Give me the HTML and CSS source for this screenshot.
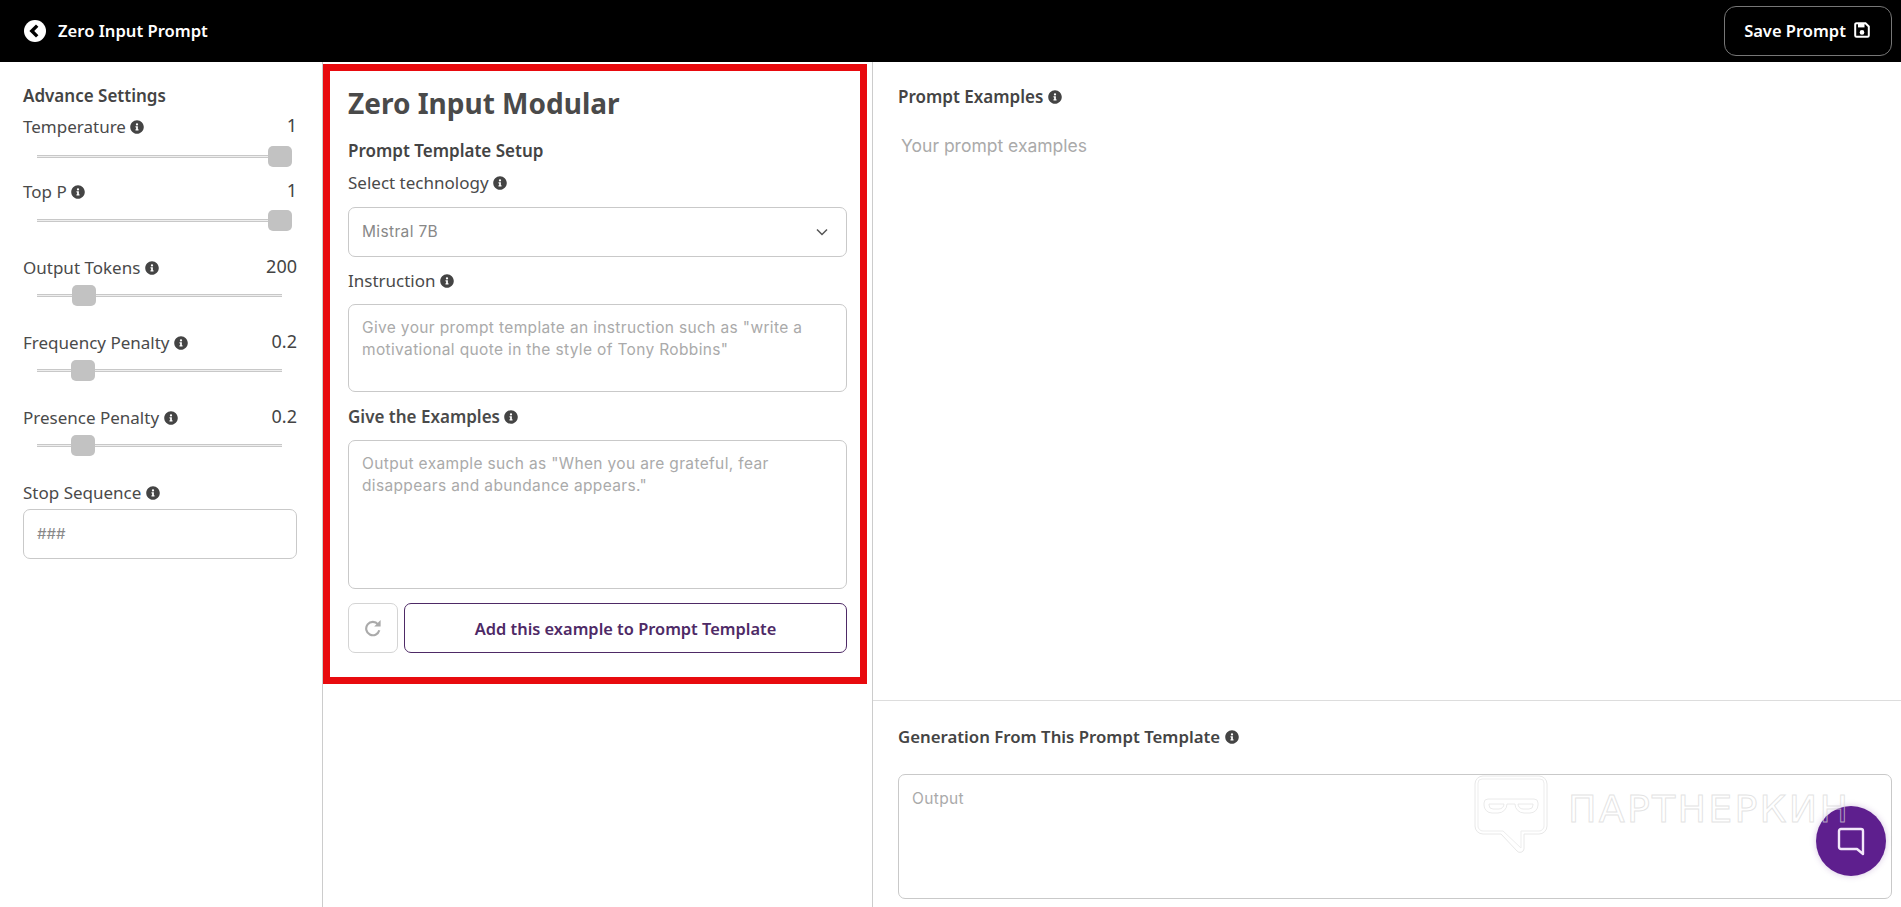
FILE: index.html
```html
<!DOCTYPE html>
<html lang="en">
<head>
<meta charset="utf-8">
<title>Zero Input Prompt</title>
<link rel="stylesheet" href="styles.css">
</head>
<body>
<svg class="defs" width="0" height="0" aria-hidden="true">
  <symbol id="info" viewBox="0 0 512 512"><path d="M256 8C119 8 8 119 8 256s111 248 248 248 248-111 248-248S393 8 256 8zm0 110a42 42 0 1 1 0 84 42 42 0 0 1 0-84zm56 254c0 7-5 12-12 12h-88c-7 0-12-5-12-12v-24c0-7 5-12 12-12h12v-64h-12c-7 0-12-5-12-12v-24c0-7 5-12 12-12h64c7 0 12 5 12 12v100h12c7 0 12 5 12 12z"/></symbol>
</svg>
<header class="topbar">
  <div class="crumb">
    <svg class="back" viewBox="0 0 22 22"><circle cx="11" cy="11" r="11" fill="#fff"/><path d="M13.2 5.6L7.8 11l5.4 5.4" fill="none" stroke="#000" stroke-width="3.4"/></svg>
    <span>Zero Input Prompt</span>
  </div>
  <button class="save">Save Prompt
    <svg class="save-ico" viewBox="0 0 16 16"><path d="M2.5 1.2h9l3.3 3.3v9a1.3 1.3 0 0 1-1.3 1.3h-11a1.3 1.3 0 0 1-1.3-1.3v-11a1.3 1.3 0 0 1 1.3-1.3z" fill="none" stroke="#fff" stroke-width="2"/><rect x="4" y="2" width="6.5" height="3.4" fill="#fff"/><circle cx="8" cy="10.4" r="2.3" fill="#fff"/></svg>
  </button>
</header>
<main class="layout">
  <aside class="side">
    <h2 class="side-title">Advance Settings</h2>
    <div class="setting s1">
      <div class="row"><span class="lbl">Temperature <svg class="i"><use href="#info"/></svg></span><span class="val">1</span></div>
      <div class="track"><span class="thumb" style="left:231px"></span></div>
    </div>
    <div class="setting s2">
      <div class="row"><span class="lbl">Top P <svg class="i"><use href="#info"/></svg></span><span class="val">1</span></div>
      <div class="track"><span class="thumb" style="left:231px"></span></div>
    </div>
    <div class="setting s3">
      <div class="row"><span class="lbl">Output Tokens <svg class="i"><use href="#info"/></svg></span><span class="val">200</span></div>
      <div class="track"><span class="thumb" style="left:35px"></span></div>
    </div>
    <div class="setting s3">
      <div class="row"><span class="lbl">Frequency Penalty <svg class="i"><use href="#info"/></svg></span><span class="val">0.2</span></div>
      <div class="track"><span class="thumb" style="left:34px"></span></div>
    </div>
    <div class="setting s3">
      <div class="row"><span class="lbl">Presence Penalty <svg class="i"><use href="#info"/></svg></span><span class="val">0.2</span></div>
      <div class="track"><span class="thumb" style="left:34px"></span></div>
    </div>
    <div class="stop">
      <span class="lbl">Stop Sequence <svg class="i"><use href="#info"/></svg></span>
      <div class="field stop-field">###</div>
    </div>
  </aside>
  <section class="mid">
    <div class="panel">
      <h1 class="panel-title">Zero Input Modular</h1>
      <h3 class="panel-sub">Prompt Template Setup</h3>
      <div class="lbl l-tech">Select technology <svg class="i"><use href="#info"/></svg></div>
      <div class="field select">Mistral 7B
        <svg class="chev" viewBox="0 0 16 16"><path d="M3 5.5l5 5 5-5" fill="none" stroke="#555" stroke-width="1.5"/></svg>
      </div>
      <div class="lbl l-ins">Instruction <svg class="i"><use href="#info"/></svg></div>
      <div class="field area a1">Give your prompt template an instruction such as "write a motivational quote in the style of Tony Robbins"</div>
      <div class="lbl l-ex">Give the Examples <svg class="i"><use href="#info"/></svg></div>
      <div class="field area a2">Output example such as "When you are grateful, fear disappears and abundance appears."</div>
      <div class="actions">
        <button class="reset"><svg viewBox="0 0 20 20" width="18" height="18"><path d="M15.6 6A7.4 7.4 0 1 0 17 12.5" fill="none" stroke="#aaa" stroke-width="2.4"/><path d="M18.5 1.2v7.2h-7.2z" fill="#aaa"/></svg></button>
        <button class="add">Add this example to Prompt Template</button>
      </div>
    </div>
  </section>
  <section class="right">
    <div class="examples">
      <div class="strong">Prompt Examples <svg class="i"><use href="#info"/></svg></div>
      <p class="ph-big">Your prompt examples</p>
    </div>
    <div class="gen">
      <div class="strong">Generation From This Prompt Template <svg class="i"><use href="#info"/></svg></div>
      <div class="field out">Output</div>
    </div>
  </section>
</main>
<button class="chat"><svg viewBox="0 0 32 32" width="32" height="32"><path d="M6 4h20a2 2 0 0 1 2 2v23l-6-5H6a2 2 0 0 1-2-2V6a2 2 0 0 1 2-2z" fill="none" stroke="#f3e8fa" stroke-width="2.4" stroke-linejoin="round"/></svg></button>
<div class="mark">
  <svg class="mark-logo" viewBox="0 0 74 80"><path d="M9 1h56a8 8 0 0 1 8 8v42a8 8 0 0 1-8 8H50v15a4 4 0 0 1-7 2L27 59H9a8 8 0 0 1-8-8V9a8 8 0 0 1 8-8z" fill="none" stroke="#e8e8e8" stroke-width="1"/><path d="M8 4h58a4 4 0 0 1 4 4v43a5 5 0 0 1-5 5H47v17L29 56H9a5 5 0 0 1-5-5V8a4 4 0 0 1 4-4z" fill="none" stroke="#ededed" stroke-width="1"/><path d="M14 24h46a4 4 0 0 1 4 4v2a8 8 0 0 1-8 8h-6a9 9 0 0 1-9-9h-8a9 9 0 0 1-9 9h-6a8 8 0 0 1-8-8v-2a4 4 0 0 1 4-4zM15 29v1a4 4 0 0 0 4 4h6a5 5 0 0 0 5-5zM44 29a5 5 0 0 0 5 5h6a4 4 0 0 0 4-4v-1z" fill="none" stroke="#e8e8e8" stroke-width=".9"/></svg>
  <span class="mark-text">ПАРТНЕРКИН</span>
</div>
</body>
</html>
```
FILE: styles.css
```css
* { box-sizing: border-box; }
html, body { margin: 0; height: 100%; overflow: hidden; }
body { font-family: "Noto Sans", "Liberation Sans", sans-serif; color: #444; background: #fff; font-size: 16px; display: flex; flex-direction: column; }
.defs { position: absolute; }
.topbar { height: 62px; flex: none; background: #000; display: flex; align-items: center; justify-content: space-between; padding: 0 9px 0 24px; }
.crumb { display: flex; align-items: center; gap: 12px; color: #fff; font-weight: 600; font-size: 16.6px; padding-bottom: 1px; }
.back { width: 22px; height: 22px; }
.save { width: 168px; height: 50px; background: #000; color: #fff; border: 1px solid #777; border-radius: 12px; font: 600 16.5px "Noto Sans", sans-serif; display: flex; align-items: center; justify-content: center; gap: 8px; padding: 0 2px 2px 0; }
.save-ico { width: 16px; height: 16px; }
.layout { flex: 1; display: flex; min-height: 0; }
.i { width: 14px; height: 14px; fill: #444; vertical-align: -1px; }
.lbl { font-size: 17px; color: #4a4a4a; }
.side { width: 323px; flex: none; border-right: 1px solid #ccc; padding: 24px 25px 0 23px; }
.side-title { margin: 0; font-size: 17px; font-weight: 600; line-height: 20px; color: #444; }
.row { display: flex; justify-content: space-between; align-items: flex-start; height: 24px; line-height: 24px; }
.val { font-size: 18px; line-height: 20px; }
.track { position: relative; height: 3px; margin: 0 15px 0 14px; background: #eee; border-top: 1px solid #c8c8c8; border-bottom: 1px solid #c8c8c8; }
.thumb { position: absolute; top: -10px; width: 24px; height: 21px; background: #c2c2c2; border-radius: 5px; }
.setting.s1 { margin-top: 9px; }
.setting.s1 .track { margin-top: 16px; }
.setting.s2 { margin-top: 22px; }
.setting.s2 .track { margin-top: 15px; }
.setting.s3 { margin-top: 34px; }
.setting.s3 .track { margin-top: 14px; }
.stop { margin-top: 34px; }
.stop .lbl { display: block; line-height: 24px; }
.field { border: 1px solid #c9c9c9; border-radius: 7px; font-family: "Inter", sans-serif; color: #aaa; background: #fff; font-size: 15.5px; letter-spacing: .35px; }
.stop-field { height: 50px; margin-top: 4px; padding: 0 13px; line-height: 48px; color: #888; letter-spacing: 0; font-size: 15px; }
.mid { width: 550px; flex: none; border-right: 1px solid #ccc; padding: 2px 5px 0 0; }
.panel { border: 7px solid #e80a0e; height: 620px; padding: 0 13px 0 18px; }
.panel-title { margin: 14px 0 0; font-size: 28px; font-weight: 700; line-height: 36px; color: #4a4a4a; }
.panel-sub { margin: 19px 0 0; font-size: 17px; font-weight: 600; line-height: 22px; color: #444; }
.l-tech { margin-top: 10px; line-height: 22px; }
.select { height: 50px; margin-top: 13px; padding: 0 13px; line-height: 48px; color: #888; display: flex; justify-content: space-between; align-items: center; }
.chev { width: 16px; height: 16px; margin-right: 3px; }
.l-ins { margin-top: 13px; line-height: 22px; }
.area { margin-top: 12px; padding: 12px 13px; line-height: 21.5px; }
.a1 { height: 88px; }
.l-ex { margin-top: 14px; line-height: 22px; font-weight: 600; }
.a2 { height: 149px; }
.actions { display: flex; gap: 6px; margin-top: 14px; }
.reset { width: 50px; height: 50px; background: #fff; border: 1px solid #d4d4d4; border-radius: 7px; display: flex; align-items: center; justify-content: center; }
.add { flex: 1; height: 50px; background: #fff; border: 1px solid #4e2a66; border-radius: 7px; color: #4e2a66; font: 600 16.4px "Noto Sans", sans-serif; }
.right { flex: 1; min-width: 0; display: flex; flex-direction: column; }
.examples { height: 639px; flex: none; border-bottom: 1px solid #ddd; padding: 24px 0 0 25px; }
.strong { font-weight: 600; font-size: 17px; line-height: 22px; color: #444; }
.gen .strong { font-size: 16.8px; }
.ph-big { margin: 27px 0 0 3px; font: 400 17.5px/22px "Inter", sans-serif; color: #aaa; }
.gen { flex: 1; padding: 25px 9px 0 25px; }
.out { margin-top: 26px; height: 125px; padding: 14px 13px; font-size: 15.5px; }
.mark { position: absolute; left: 1474px; top: 775px; display: flex; gap: 20px; pointer-events: none; }
.mark-logo { width: 74px; height: 80px; }
.mark-text { margin-top: 14px; font: 400 38px/40px "DejaVu Sans", sans-serif; letter-spacing: 2.2px; color: transparent; -webkit-text-stroke: 1px rgba(215,215,215,.7); }
.chat { position: absolute; left: 1816px; top: 806px; width: 70px; height: 70px; border: 0; border-radius: 50%; background: #5e1f8e; display: flex; align-items: center; justify-content: center; box-shadow: 0 0 6px rgba(94,31,142,.25); padding: 0; }
```
